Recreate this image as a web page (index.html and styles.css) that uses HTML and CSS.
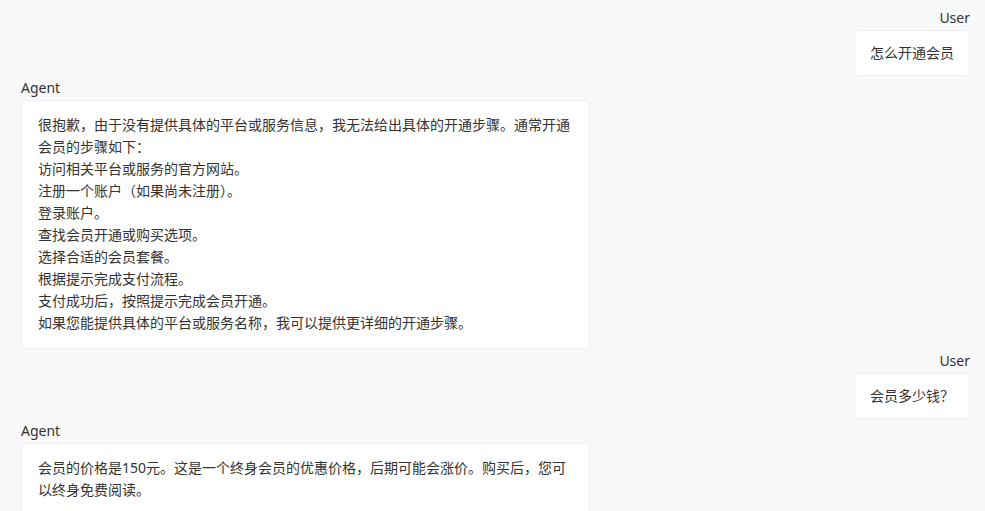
FILE: index.html
```html
<!DOCTYPE html>
<html lang="zh-CN">
<head>
    <meta charset="UTF-8">
    <meta name="viewport" content="width=device-width, initial-scale=1.0">
    <title>Chat</title>
    <link rel="stylesheet" href="styles.css">
</head>
<body>

    <div class="chat">
        <div class="msg user">
            <div class="label">User</div>
            <div class="bubble">怎么开通会员</div>
        </div>

        <div class="msg agent">
            <div class="label">Agent</div>
            <div class="bubble">
                很抱歉，由于没有提供具体的平台或服务信息，我无法给出具体的开通步骤。通常开通会员的步骤如下：<br>
                访问相关平台或服务的官方网站。<br>
                注册一个账户（如果尚未注册）。<br>
                登录账户。<br>
                查找会员开通或购买选项。<br>
                选择合适的会员套餐。<br>
                根据提示完成支付流程。<br>
                支付成功后，按照提示完成会员开通。<br>
                如果您能提供具体的平台或服务名称，我可以提供更详细的开通步骤。
            </div>
        </div>

        <div class="msg user">
            <div class="label">User</div>
            <div class="bubble">会员多少钱？</div>
        </div>

        <div class="msg agent">
            <div class="label">Agent</div>
            <div class="bubble">
                会员的价格是150元。这是一个终身会员的优惠价格，后期可能会涨价。购买后，您可以终身免费阅读。
            </div>
        </div>
    </div>

</body>
</html>
```

FILE: styles.css
```css
body {
    margin: 0;
    background-color: #f9f9fb;
    color: #333;
    font-family: "Noto Sans", "Noto Sans CJK SC", sans-serif;
    font-size: 14px;
}
.chat {
    padding: 8px 15px 20px 21px;
}
.msg {
    display: flex;
    flex-direction: column;
    align-items: flex-start;
    margin-bottom: 2px;
}
.msg.user {
    align-items: flex-end;
}
.label {
    line-height: 20px;
    margin-bottom: 2px;
}
.bubble {
    background-color: #fff;
    border: 1px solid #efeff3;
    border-radius: 4px;
    line-height: 22px;
    padding: 13px 16px 14px;
    max-width: 535px;
}
.user .bubble {
    padding: 11px 15px;
}
```
